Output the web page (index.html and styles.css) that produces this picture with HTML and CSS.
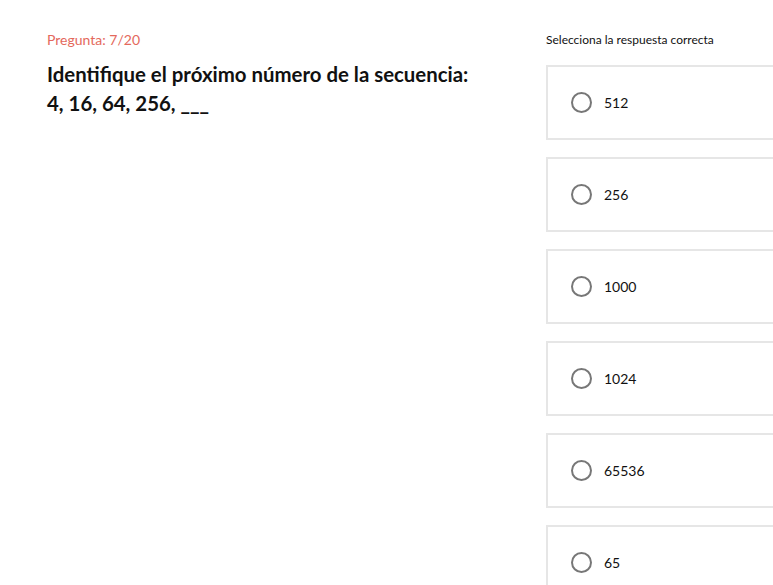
FILE: index.html
```html
<!DOCTYPE html>
<html lang="es">
<head>
<meta charset="utf-8">
<title>Pregunta</title>
<link rel="stylesheet" href="styles.css">
</head>
<body>
<main class="quiz">
  <section class="question">
    <p class="counter">Pregunta: 7/20</p>
    <h1 class="prompt">Identifique el próximo número de la secuencia:<br>4, 16, 64, 256, ___</h1>
  </section>
  <section class="answers">
    <p class="hint">Selecciona la respuesta correcta</p>
    <ul class="options">
      <li class="option"><span class="radio"></span><span class="label">512</span></li>
      <li class="option"><span class="radio"></span><span class="label">256</span></li>
      <li class="option"><span class="radio"></span><span class="label">1000</span></li>
      <li class="option"><span class="radio"></span><span class="label">1024</span></li>
      <li class="option"><span class="radio"></span><span class="label">65536</span></li>
      <li class="option"><span class="radio"></span><span class="label">65</span></li>
    </ul>
  </section>
</main>
</body>
</html>
```
FILE: styles.css
```css
html, body {
  margin: 0;
  padding: 0;
  background: #fff;
  overflow: hidden;
}
body {
  font-family: "Lato", "Noto Sans", sans-serif;
  color: #111;
  width: 773px;
  height: 585px;
}
.quiz {
  display: flex;
  padding: 31px 0 0 47px;
}
.question {
  width: 499px;
  flex: none;
}
.counter {
  margin: 0;
  font-size: 14px;
  line-height: 18px;
  color: #e4695c;
}
.prompt {
  margin: 11px 0 0;
  font-size: 20.4px;
  line-height: 29px;
  font-weight: 700;
  color: #111;
}
.answers {
  flex: none;
  width: 227px;
  height: 554px;
  overflow: hidden;
}
.hint {
  margin: 0;
  padding-top: 1px;
  font-size: 12px;
  line-height: 16px;
  color: #111;
}
.options {
  list-style: none;
  width: 300px;
  margin: 17px 0 0;
  padding: 0;
  display: flex;
  flex-direction: column;
  gap: 17px;
}
.option {
  box-sizing: border-box;
  height: 75px;
  border: 2px solid #e6e6e6;
  display: flex;
  align-items: center;
  padding-left: 23px;
}
.radio {
  box-sizing: border-box;
  width: 21px;
  height: 21px;
  border: 2px solid #777;
  border-radius: 50%;
  flex: none;
}
.label {
  margin-left: 12px;
  font-size: 14px;
  color: #111;
}
```
